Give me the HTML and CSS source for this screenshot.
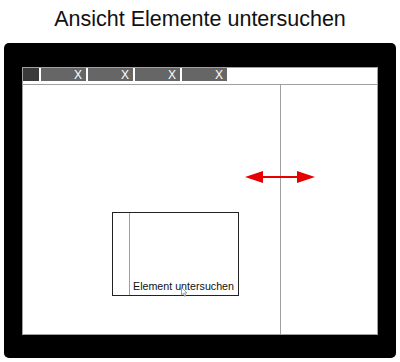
FILE: index.html
```html
<!DOCTYPE html>
<html>
<head>
<meta charset="utf-8">
<link rel="stylesheet" href="styles.css">
</head>
<body>
<h1 class="title">Ansicht Elemente untersuchen</h1>
<div class="frame">
  <div class="screen">
    <div class="tabbar">
      <div class="tab-home"></div>
      <div class="tab">X</div>
      <div class="tab">X</div>
      <div class="tab">X</div>
      <div class="tab">X</div>
    </div>
    <div class="content">
      <div class="pane-left"></div>
      <div class="pane-right"></div>
      <svg class="arrow" width="70" height="14" viewBox="0 0 70 14">
        <polygon points="0,7 18,1 18,13" fill="#e60000"/>
        <polygon points="70,7 52,1 52,13" fill="#e60000"/>
        <rect x="16" y="6" width="38" height="2" fill="#e60000"/>
      </svg>
      <div class="popup">
        <div class="popup-strip"></div>
        <div class="popup-body"><span class="popup-text">Element untersuchen</span></div>
        <svg class="cursor" width="7" height="10" viewBox="0 0 7 10">
          <path d="M0.5 0.5 L0.5 8 L2.3 6.3 L3.6 9.3 L4.8 8.8 L3.6 5.9 L6 5.9 Z" fill="#fff" stroke="#888" stroke-width="0.8"/>
        </svg>
      </div>
    </div>
  </div>
</div>
</body>
</html>
```
FILE: styles.css
```css
html, body {
  margin: 0;
  padding: 0;
  background: #fff;
}
body {
  width: 400px;
  height: 362px;
  overflow: hidden;
  font-family: "Liberation Sans", Arial, sans-serif;
}
.title {
  margin: 0;
  height: 43px;
  box-sizing: border-box;
  padding-top: 7px;
  font-size: 21.5px;
  font-weight: normal;
  line-height: 24px;
  text-align: center;
  color: #111;
}
.frame {
  margin: 0 4px;
  height: 315px;
  box-sizing: border-box;
  background: #000;
  border-radius: 5px;
  padding: 24px 18px 23px 18px;
}
.screen {
  height: 268px;
  box-sizing: border-box;
  background: #fff;
  border: 1px solid #a0a0a0;
  display: flex;
  flex-direction: column;
}
.tabbar {
  display: flex;
  gap: 2px;
  height: 17px;
  box-sizing: border-box;
  padding-bottom: 3px;
  border-bottom: 1px solid #a0a0a0;
}
.tab-home {
  width: 16px;
  background: #3a3a3a;
}
.tab {
  width: 45px;
  background: #666;
  color: #fff;
  font-size: 12px;
  line-height: 14px;
  text-align: right;
  padding-right: 4px;
  box-sizing: border-box;
}
.content {
  position: relative;
  flex: 1;
  display: flex;
}
.pane-left {
  width: 257px;
  border-right: 1px solid #a0a0a0;
}
.pane-right {
  flex: 1;
}
.arrow {
  position: absolute;
  left: 222px;
  top: 85px;
}
.popup {
  position: absolute;
  left: 89px;
  top: 127px;
  width: 127px;
  height: 84px;
  box-sizing: border-box;
  border: 1px solid #222;
  background: #fff;
  display: flex;
}
.popup-strip {
  width: 16px;
  border-right: 1px solid #a0a0a0;
}
.popup-body {
  flex: 1;
  display: flex;
  align-items: flex-end;
  padding: 0 0 2px 3px;
}
.popup-text {
  font-size: 10.7px;
  line-height: 13px;
  color: #111;
  white-space: nowrap;
}
.cursor {
  position: absolute;
  left: 68px;
  top: 74px;
}
```
